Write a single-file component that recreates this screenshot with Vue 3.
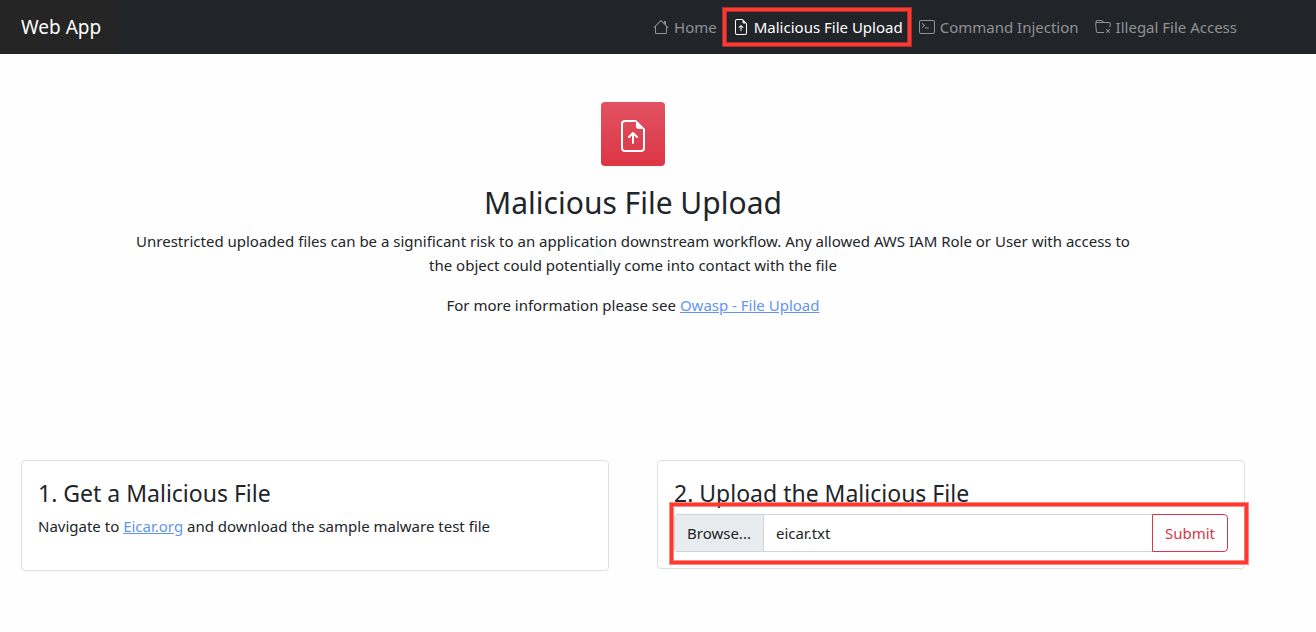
<script setup>
import { ref } from 'vue'

const fileIcon = [
  'M8.5 11.5a.5.5 0 0 1-1 0V7.707L6.354 8.854a.5.5 0 1 1-.708-.708l2-2a.5.5 0 0 1 .708 0l2 2a.5.5 0 0 1-.708.708L8.5 7.707V11.5z',
  'M14 14V4.5L9.5 0H4a2 2 0 0 0-2 2v12a2 2 0 0 0 2 2h8a2 2 0 0 0 2-2zM9.5 3A1.5 1.5 0 0 0 11 4.5h2V14a1 1 0 0 1-1 1H4a1 1 0 0 1-1-1V2a1 1 0 0 1 1-1h5.5v2z',
]

const links = [
  {
    label: 'Home',
    icon: [
      'M2 13.5V7h1v6.5a.5.5 0 0 0 .5.5h9a.5.5 0 0 0 .5-.5V7h1v6.5a1.5 1.5 0 0 1-1.5 1.5h-9A1.5 1.5 0 0 1 2 13.5zm11-11V6l-2-2V2.5a.5.5 0 0 1 .5-.5h1a.5.5 0 0 1 .5.5z',
      'M7.293 1.5a1 1 0 0 1 1.414 0l6.647 6.646a.5.5 0 0 1-.708.708L8 2.207 1.354 8.854a.5.5 0 1 1-.708-.708L7.293 1.5z',
    ],
  },
  { label: 'Malicious File Upload', icon: fileIcon, active: true },
  {
    label: 'Command Injection',
    icon: [
      'M6 9a.5.5 0 0 1 .5-.5h3a.5.5 0 0 1 0 1h-3A.5.5 0 0 1 6 9zM3.854 4.146a.5.5 0 1 0-.708.708L4.793 6.5 3.146 8.146a.5.5 0 1 0 .708.708l2-2a.5.5 0 0 0 0-.708l-2-2z',
      'M2 1a2 2 0 0 0-2 2v10a2 2 0 0 0 2 2h12a2 2 0 0 0 2-2V3a2 2 0 0 0-2-2H2zm12 1a1 1 0 0 1 1 1v10a1 1 0 0 1-1 1H2a1 1 0 0 1-1-1V3a1 1 0 0 1 1-1h12z',
    ],
  },
  {
    label: 'Illegal File Access',
    icon: [
      'M.54 3.87.5 3a2 2 0 0 1 2-2h3.672a2 2 0 0 1 1.414.586l.828.828A2 2 0 0 0 9.828 3h3.982a2 2 0 0 1 1.992 2.181L15.546 8H14.54l.265-2.91A1 1 0 0 0 13.81 4H2.19a1 1 0 0 0-.996 1.09l.637 7a1 1 0 0 0 .995.91H9v1H2.826a2 2 0 0 1-1.991-1.819l-.637-7a1.99 1.99 0 0 1 .342-1.31zm6.339-1.577A1 1 0 0 0 6.172 2H2.5a1 1 0 0 0-1 .981l.006.139C1.72 3.042 1.95 3 2.19 3h5.396l-.707-.707z',
      'M11.854 10.146a.5.5 0 0 0-.707.708L12.293 12l-1.146 1.146a.5.5 0 0 0 .707.708L13 12.707l1.146 1.147a.5.5 0 0 0 .708-.708L13.707 12l1.147-1.146a.5.5 0 0 0-.707-.708L13 11.293l-1.146-1.147z',
    ],
  },
]

const fileName = ref('eicar.txt')

function onFile(event) {
  const file = event.target.files[0]
  if (file) fileName.value = file.name
}
</script>

<template>
  <div class="page">
    <header class="navbar">
      <a class="brand" href="#">Web App</a>
      <nav class="links">
        <a
          v-for="link in links"
          :key="link.label"
          href="#"
          class="link"
          :class="{ active: link.active }"
        >
          <svg viewBox="0 0 16 16" width="16" height="16" fill="currentColor" aria-hidden="true">
            <path v-for="d in link.icon" :key="d" :d="d" />
          </svg>
          <span>{{ link.label }}</span>
          <span v-if="link.active" class="highlight"></span>
        </a>
      </nav>
    </header>

    <main class="content">
      <section class="hero">
        <div class="badge">
          <svg viewBox="0 0 16 16" width="32" height="32" fill="currentColor" aria-hidden="true">
            <path v-for="d in fileIcon" :key="d" :d="d" />
          </svg>
        </div>
        <h1>Malicious File Upload</h1>
        <p>
          Unrestricted uploaded files can be a significant risk to an application downstream
          workflow. Any allowed AWS IAM Role or User with access to the object could potentially
          come into contact with the file
        </p>
        <p>For more information please see <a href="#">Owasp - File Upload</a></p>
      </section>

      <section class="cards">
        <article class="card intro">
          <h2>1. Get a Malicious File</h2>
          <p>Navigate to <a href="#">Eicar.org</a> and download the sample malware test file</p>
        </article>
        <article class="card">
          <h2>2. Upload the Malicious File</h2>
          <form class="upload" @submit.prevent>
            <label class="picker">
              <input type="file" @change="onFile" />
              <span class="browse">Browse...</span>
              <span class="name">{{ fileName }}</span>
            </label>
            <button type="submit">Submit</button>
            <span class="highlight"></span>
          </form>
        </article>
      </section>
    </main>
  </div>
</template>

<style>
body {
  margin: 0;
  background: #fefefe;
}
</style>

<style scoped>
.page {
  min-height: 100vh;
  color: #212529;
  font-family: "Segoe UI", "Noto Sans", "Open Sans", sans-serif;
  font-size: 15px;
  line-height: 24px;
}

.page * {
  box-sizing: border-box;
}

.navbar {
  display: flex;
  justify-content: space-between;
  align-items: center;
  height: 54px;
  padding-right: 71px;
  background: #212529;
}

.brand {
  display: flex;
  align-items: center;
  height: 54px;
  padding: 0 17px 0 21px;
  background: #252525;
  color: #fff;
  font-size: 19px;
  text-decoration: none;
}

.links {
  display: flex;
}

.link {
  position: relative;
  display: flex;
  align-items: center;
  gap: 5px;
  padding: 8px;
  color: #909294;
  text-decoration: none;
  white-space: nowrap;
}

.link.active {
  color: #fff;
}

.highlight {
  position: absolute;
  border: 3px solid #ff3830;
  box-shadow: 0 0 0 1px rgba(255, 56, 48, 0.6), inset 0 0 0 1px rgba(255, 56, 48, 0.6);
  pointer-events: none;
}

.link .highlight {
  inset: 1px 0 1px -2px;
}

.content {
  padding: 48px 71px 60px 21px;
}

.hero {
  display: flex;
  flex-direction: column;
  align-items: center;
  min-height: 358px;
  text-align: center;
}

.badge {
  display: flex;
  align-items: center;
  justify-content: center;
  width: 64px;
  height: 64px;
  padding-top: 4px;
  border-radius: 4px;
  background: linear-gradient(#e15361, #dc3545);
  color: #fff;
}

h1 {
  margin: 17px 0 6px;
  font-size: 30px;
  font-weight: 400;
  line-height: 40px;
}

p {
  margin: 0;
}

.hero p {
  max-width: 1008px;
  margin-bottom: 16px;
}

p a {
  color: #6495ed;
}

.cards {
  display: grid;
  grid-template-columns: 1fr 1fr;
  align-items: start;
  gap: 48px;
}

.card {
  padding: 16px;
  border: 1px solid #dfdfdf;
  border-radius: 4px;
  background: #fff;
}

.intro {
  padding-bottom: 32px;
}

h2 {
  margin: 0 0 5px;
  font-size: 23px;
  font-weight: 400;
  line-height: 32px;
}

.upload {
  position: relative;
  display: flex;
}

.upload .highlight {
  inset: -11px -20px -12px -4px;
}

.picker {
  position: relative;
  display: flex;
  flex: 1;
  height: 38px;
  border: 1px solid #ced4da;
  border-right: 0;
  border-radius: 4px 0 0 4px;
  line-height: 36px;
  cursor: pointer;
}

.picker input {
  position: absolute;
  inset: 0;
  width: 100%;
  height: 100%;
  opacity: 0;
  cursor: pointer;
}

.browse {
  padding: 0 12px;
  border-right: 1px solid #ced4da;
  border-radius: 3px 0 0 3px;
  background: #e9ecef;
}

.name {
  padding: 0 12px;
}

button {
  height: 38px;
  padding: 0 12px;
  border: 1px solid #dc3545;
  border-radius: 0 4px 4px 0;
  background: transparent;
  color: #dc3545;
  font: inherit;
  cursor: pointer;
}
</style>
